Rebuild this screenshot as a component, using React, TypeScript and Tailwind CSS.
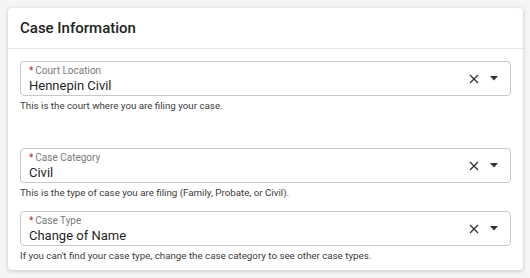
import React from 'react'

const fields = [
  {
    id: 'court',
    label: 'Court Location',
    value: 'Hennepin Civil',
    help: 'This is the court where you are filing your case.',
    spacer: true,
  },
  {
    id: 'category',
    label: 'Case Category',
    value: 'Civil',
    help: 'This is the type of case you are filing (Family, Probate, or Civil).',
    spacer: false,
  },
  {
    id: 'type',
    label: 'Case Type',
    value: 'Change of Name',
    help: "If you can't find your case type, change the case category to see other case types.",
    spacer: false,
  },
]

const SelectField = ({ label, value, help }: { label: string; value: string; help: string }) => {
  return (
    <div>
      <div className="flex h-[35px] items-center rounded border border-[#c8c8c8] bg-white pl-2 pr-3">
        <div className="flex flex-1 flex-col pt-[2px]">
          <span className="text-[10px] leading-[12px] text-[#7a7a7a]">
            <span className="mr-[2px] text-[#b0243a]">*</span>
            {label}
          </span>
          <span className="text-[13px] leading-[18px] text-[#1f1f1f]">{value}</span>
        </div>
        {/* clear + caret */}
        <svg width="10" height="10" viewBox="0 0 10 10" className="mr-[11px]">
          <path d="M1 1L9 9M9 1L1 9" stroke="#333" strokeWidth="1.3" />
        </svg>
        <svg width="8" height="5" viewBox="0 0 8 5">
          <path d="M0 0H8L4 4.5Z" fill="#333" />
        </svg>
      </div>
      <p className="mt-[3px] text-[9.75px] leading-[13px] text-[#3a3a3a]">{help}</p>
    </div>
  )
}

const App = () => {
  return (
    <div
      className="h-[278px] w-[530px] bg-[#f5f5f5] pl-2 pt-2"
      style={{ fontFamily: 'Roboto, "Liberation Sans", sans-serif' }}
    >
      <section className="h-[262px] w-[515px] rounded bg-white shadow-[0_1px_4px_rgba(0,0,0,0.2)]">
        {/* Header */}
        <div className="flex h-[41px] items-center border-b border-[#e6e6e6] px-3">
          <h2 className="text-[15px] font-medium text-[#222]">Case Information</h2>
        </div>
        {/* Fields */}
        <div className="flex flex-col px-3 pt-[12px]">
          {fields.map(({ id, label, value, help, spacer }) => (
            <div key={id} className={spacer ? 'mb-[36px]' : 'mb-[12px]'}>
              <SelectField label={label} value={value} help={help} />
            </div>
          ))}
        </div>
      </section>
    </div>
  )
}

export default App
